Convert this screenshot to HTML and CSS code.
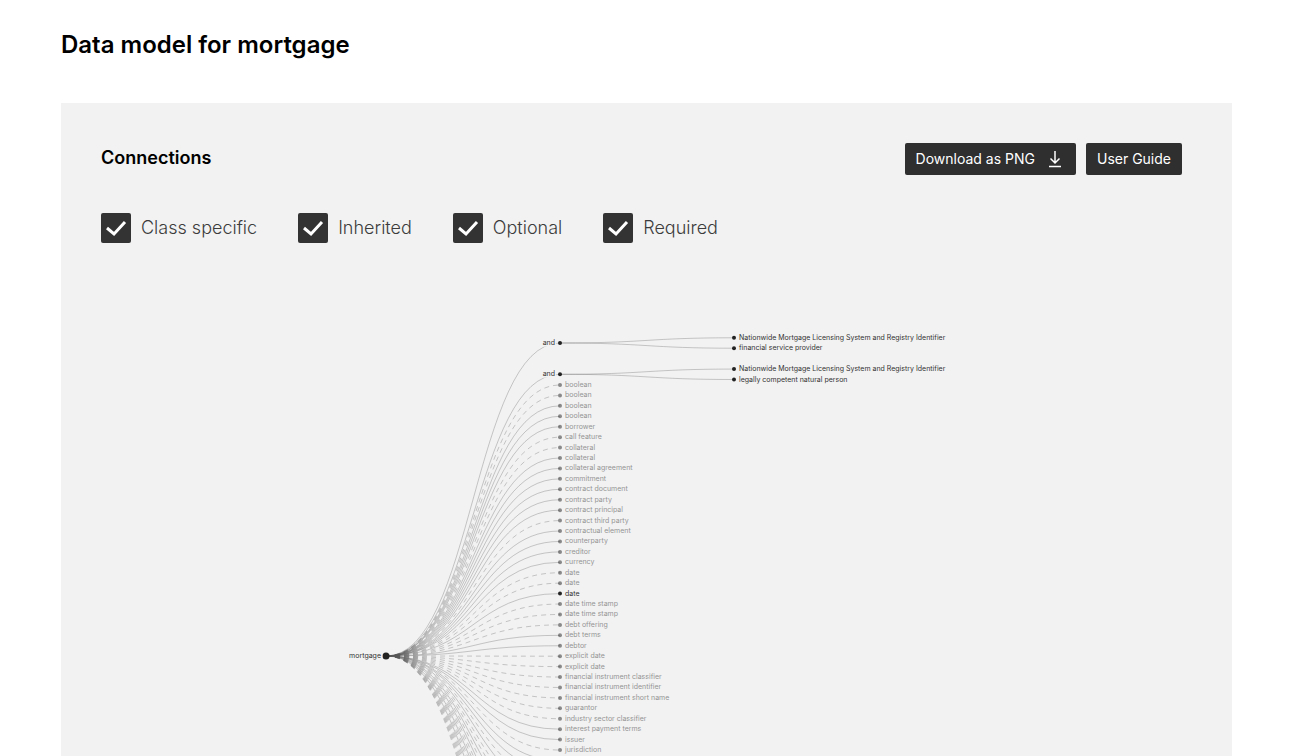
FILE: index.html
```html
<!DOCTYPE html>
<html lang="en">
<head>
<meta charset="utf-8">
<title>Data model for mortgage</title>
<link rel="stylesheet" href="styles.css">
</head>
<body>
<main class="page">
  <h1 class="page-title">Data model for mortgage</h1>
  <section class="panel">
    <header class="panel-header">
      <h2 class="panel-title">Connections</h2>
      <div class="actions">
        <button class="button button-download" type="button">Download as PNG
          <svg class="button-icon" viewBox="0 0 14 18" aria-hidden="true"><path d="M7 1v11.500M2.500 8.500 7 13l4.500-4.500M1 16.500h12"/></svg>
        </button>
        <button class="button" type="button">User Guide</button>
      </div>
    </header>
    <div class="filters">
      <label class="filter"><input class="filter-box" type="checkbox" checked>Class specific</label>
      <label class="filter"><input class="filter-box" type="checkbox" checked>Inherited</label>
      <label class="filter"><input class="filter-box" type="checkbox" checked>Optional</label>
      <label class="filter"><input class="filter-box" type="checkbox" checked>Required</label>
    </div>
    <div class="chart">
      <svg class="tree" id="tree" width="700" height="680" viewBox="0 0 700 680" role="img" aria-label="Connections of mortgage"></svg>
    </div>
  </section>
</main>
<script src="tree.js"></script>
</body>
</html>
```
FILE: styles.css
```css
* {
  box-sizing: border-box;
}

body {
  margin: 0;
  background: #fff;
  color: #000;
  font-family: Inter, "Liberation Sans", sans-serif;
}

.page {
  display: flex;
  flex-direction: column;
  height: 100vh;
  padding: 30px 60px 0 61px;
  overflow: hidden;
}

.page-title {
  margin: 0 0 43px;
  font-size: 24px;
  font-weight: 600;
  line-height: 30px;
}

.panel {
  display: flex;
  flex: 1;
  flex-direction: column;
  min-height: 0;
  padding: 40px 50px 0 40px;
  background: #f2f2f2;
}

.panel-header {
  display: flex;
  align-items: flex-start;
  justify-content: space-between;
}

.panel-title {
  margin: 0;
  font-size: 18px;
  font-weight: 600;
  line-height: 30px;
}

.actions {
  display: flex;
  gap: 10px;
}

.button {
  display: flex;
  align-items: center;
  gap: 13px;
  height: 32px;
  padding: 0 11px;
  border: 0;
  border-radius: 2px;
  background: #2f2f2f;
  color: #fff;
  font: 400 14px/20px Inter, sans-serif;
}

.button-download {
  padding-right: 14px;
}

.button-icon {
  width: 14px;
  height: 18px;
  fill: none;
  stroke: #fff;
  stroke-width: 1.5;
}

.filters {
  display: flex;
  gap: 41px;
  margin-top: 38px;
}

.filter {
  display: flex;
  align-items: center;
  gap: 10px;
  color: #3c3c3c;
  font-size: 18px;
  font-weight: 300;
  line-height: 30px;
}

.filter-box {
  width: 30px;
  height: 30px;
  margin: 0;
  border-radius: 2px;
  appearance: none;
  background: #333;
}

.filter-box:checked {
  background: #333 url("data:image/svg+xml,%3Csvg xmlns='http://www.w3.org/2000/svg' viewBox='0 0 30 30'%3E%3Cpath d='M6 15l7 6L24 9' fill='none' stroke='white' stroke-width='3'/%3E%3C/svg%3E");
}

.chart {
  flex: 1;
  min-height: 0;
  padding: 77px 0 0 239px;
  overflow: hidden;
}

.tree {
  display: block;
}

.link {
  fill: none;
  stroke: #555;
  stroke-opacity: 0.3;
  stroke-width: 1;
}

.link-optional {
  stroke-dasharray: 5 4;
}

.node-dot {
  fill: #222;
}

.node-label {
  fill: #333;
  stroke: #f2f2f2;
  stroke-width: 3;
  stroke-linejoin: round;
  paint-order: stroke;
  font-size: 7px;
}

.node-inherited {
  opacity: 0.5;
}
```
FILE: tree.js
```js
const SVG_NS = "http://www.w3.org/2000/svg";
const svg = document.getElementById("tree");
const ROW = 10.43;
const COLUMN = 174;
const root = { x: 46, y: 336 };

// A leading "?" marks an optional connection, a leading "!" a class-specific one.
const names = [
  "?boolean", "?boolean", "boolean", "boolean", "borrower", "?call feature",
  "?collateral", "collateral", "collateral agreement", "commitment",
  "contract document", "contract party", "contract principal",
  "?contract third party", "contractual element", "counterparty", "creditor",
  "currency", "?date", "?date", "!date", "?date time stamp",
  "?date time stamp", "?debt offering", "debt terms", "debtor",
  "?explicit date", "?explicit date", "?financial instrument classifier",
  "?financial instrument identifier", "?financial instrument short name",
  "?guarantor", "?industry sector classifier", "interest payment terms",
  "issuer", "?jurisdiction"
];

// Rows past the fold: "-" is a required connection, "?" an optional one.
const folded = "--?-??-?-??-??-??????";

function add(parent, tag, attrs, text) {
  const el = document.createElementNS(SVG_NS, tag);
  for (const key in attrs) el.setAttribute(key, attrs[key]);
  if (text) el.textContent = text;
  parent.append(el);
  return el;
}

const links = add(svg, "g", {});
const nodes = add(svg, "g", {});

function link(from, to, optional) {
  const mid = (from.x + to.x) / 2;
  add(links, "path", {
    class: optional ? "link link-optional" : "link",
    d: `M${from.x},${from.y}C${mid},${from.y} ${mid},${to.y} ${to.x},${to.y}`
  });
}

function node(at, name, { inherited = false, before = false, radius = 2 } = {}) {
  const g = add(nodes, "g", { class: inherited ? "node-inherited" : "node" });
  add(g, "circle", { class: "node-dot", cx: at.x, cy: at.y, r: radius });
  add(g, "text", {
    class: "node-label",
    x: at.x + (before ? -5 : 5),
    y: at.y + 2,
    "text-anchor": before ? "end" : "start"
  }, name);
}

const groups = [
  ["Nationwide Mortgage Licensing System and Registry Identifier", "financial service provider"],
  ["Nationwide Mortgage Licensing System and Registry Identifier", "legally competent natural person"]
];

groups.forEach((children, i) => {
  const at = { x: root.x + COLUMN, y: 23 + i * 3 * ROW };
  link(root, at, false);
  children.forEach((name, j) => {
    const leaf = { x: at.x + COLUMN, y: at.y + (j - 0.5) * ROW };
    link(at, leaf, false);
    node(leaf, name);
  });
  node(at, "and", { before: true });
});

function rowAt(i) {
  return { x: root.x + COLUMN, y: 65 + i * ROW };
}

names.forEach((entry, i) => {
  link(root, rowAt(i), entry.startsWith("?"));
  node(rowAt(i), entry.replace(/^[?!]/, ""), { inherited: !entry.startsWith("!") });
});

[...folded].forEach((kind, i) => {
  link(root, rowAt(names.length + i), kind === "?");
});

node(root, "mortgage", { before: true, radius: 3.5 });
```
